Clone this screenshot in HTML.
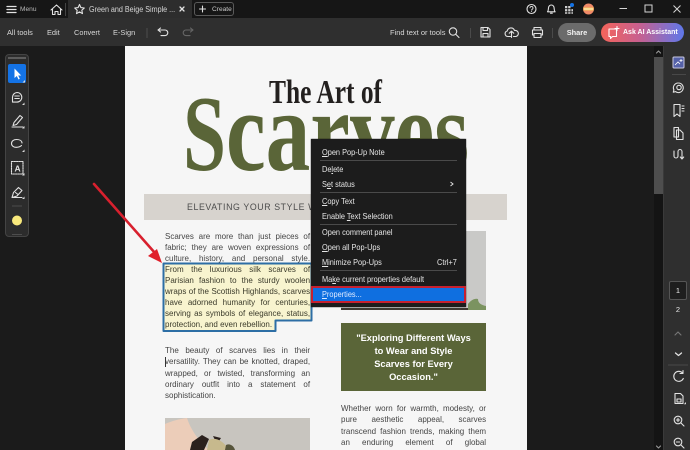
<!DOCTYPE html>
<html><head><meta charset="utf-8">
<style>
html,body{margin:0;padding:0;width:690px;height:450px;overflow:hidden;background:#1b1b1b;font-family:"Liberation Sans",sans-serif}
.a{position:absolute}
#root{position:relative;width:690px;height:450px;overflow:hidden;filter:blur(.25px)}
.t{position:absolute;white-space:nowrap;color:#d8d8d8;font-size:7.400px;line-height:10px}
.l{position:absolute;left:165px;width:156px;height:11px;font-size:8.600px;line-height:11px;color:#444;text-align:justify;text-align-last:justify;white-space:normal;transform:scaleX(.93);transform-origin:0 0}
.r{left:341px}
.hl{color:#3a3a2a}
.m{position:absolute;left:322px;color:#e6e6e6;font-size:8.400px;line-height:10px;white-space:nowrap;transform:scaleX(.88);transform-origin:0 0}
.s{position:absolute;left:320px;width:137px;height:1px;background:#4a4a4a}
.m u{text-underline-offset:1px}
svg{position:absolute;overflow:visible}
.i{fill:none;stroke:#e2e2e2;stroke-width:1.1;stroke-linecap:round;stroke-linejoin:round}
</style></head><body><div id="root">
<!-- bars -->
<div class="a" style="left:0;top:0;width:690px;height:18px;background:#161616"></div>
<div class="a" style="left:68px;top:0;width:124px;height:18px;background:#2d2d2d"></div>
<div class="a" style="left:0;top:18px;width:690px;height:28px;background:#2f2f2f"></div>
<div class="a" style="left:663px;top:46px;width:27px;height:404px;background:#2f2f2f;border-left:1px solid #3a3a3a;box-sizing:border-box"></div>
<div class="a" style="left:654px;top:46px;width:9px;height:404px;background:#141414"></div>
<div class="a" style="left:654px;top:57px;width:9px;height:137px;background:#4e4e4e"></div>
<svg style="left:0;top:0" width="690" height="450">
 <path class="i" stroke-width="1" d="M656.500 53l2-2 2 2M656.500 446l2 2 2-2" style="stroke:#999"/>
 <path d="M7 6.500h9M7 9.500h9M7 12.500h9" class="i" style="stroke-width:1.300"/>
 <path class="i" d="M51 10l5.500-5 5.500 5M52.500 9v5.500h2.500v-3h3v3h2.500V9" />
 <path d="M65.500 3v13" stroke="#444" fill="none"/>
 <path class="i" d="M79.500 4.500l1.400 3.100 3.400.4-2.500 2.300.7 3.300-3-1.700-3 1.700.7-3.300-2.500-2.300 3.400-.4z"/>
 <path class="i" d="M180 7l4 4M184 7l-4 4" style="stroke-width:1.300"/>
 <rect x="194.500" y="2.500" width="39" height="13" rx="2.500" fill="none" stroke="#5a5a5a"/>
 <path class="i" d="M199.500 9h6M202.500 6v6"/>
 <path d="M147 28v10" stroke="#4d4d4d" fill="none"/>
 <path class="i" d="M158 30h7a2.800 2.800 0 0 1 0 5.600h-4M158 30l2.500-2M158 30l2.500 2"/>
 <path class="i" style="stroke:#666" d="M193 30h-7a2.800 2.800 0 0 0 0 5.600h4M193 30l-2.500-2M193 30l-2.500 2"/>
 <circle class="i" cx="531.500" cy="9" r="4.500"/>
 <path class="i" d="M530 7.800a1.500 1.500 0 1 1 1.800 1.600v.8M531.500 11.300v.2" style="stroke-width:.9"/>
 <path class="i" d="M547.500 11.800c1-1 .8-2.500 1-4a2.800 2.800 0 0 1 5.600 0c.2 1.500 0 3 1 4zM550.500 13.200h1.800"/>
 <path fill="#cfcfcf" d="M565 6h2.300v2.300H565zM568.200 6h2.300v2.300h-2.300zM565 9.100h2.300v2.300H565zM568.200 9.100h2.300v2.300h-2.300zM571.400 9.100h1.600v2.300h-1.600zM565 12.200h2.300v1.600H565zM568.200 12.200h2.300v1.600h-2.300zM571.400 12.200h1.600v1.600h-1.600z"/>
 <circle cx="572" cy="5" r="2" fill="#1473e6"/>
 <circle cx="588.500" cy="9" r="5.500" fill="#f08a68"/>
 <path d="M583.500 7.500h10v3h-10z" fill="#f6c85a"/>
 <path d="M584 9h9" stroke="#fff0d0" fill="none"/>
 <path d="M619.500 8.500h7.500" stroke="#d5d5d5" fill="none"/>
 <rect x="645" y="5" width="7" height="7" fill="none" stroke="#d5d5d5"/>
 <path d="M673.500 5.500l7 7M680.500 5.500l-7 7" stroke="#d5d5d5" fill="none"/>
 <circle class="i" cx="453" cy="31.500" r="3.700"/>
 <path class="i" d="M456 34.500l3 3"/>
 <path d="M470.500 28v10M552.500 28v10" stroke="#4a4a4a" fill="none"/>
 <path class="i" d="M481 27.500h7l2 2V37h-9zM483 27.500v3h4.500v-3M483 37v-3.500h5V37"/>
 <path class="i" d="M510.500 36.500h-2.800a2.800 2.800 0 0 1-.5-5.500 3.800 3.800 0 0 1 7.300-.5 3 3 0 0 1 1.500 6h-2.500M511.500 37.500v-6M509.300 33.200l2.200-2 2.200 2"/>
 <path class="i" d="M534 30v-2.500h7V30M534 35h-1.500v-5h10v5H541M534 33.500h7v4h-7z"/>
</svg>
<div class="t" style="left:20px;top:4.500px;color:#b8b8b8;font-size:6.600px">Menu</div>
<div class="t" style="left:89px;top:4.500px;font-size:7.800px;color:#d6d6d6;transform:scaleX(.92);transform-origin:0 0">Green and Beige Simple ...</div>
<div class="t" style="left:212px;top:4.500px;font-size:6.600px;color:#c8c8c8">Create</div>
<div class="t" style="left:7px;top:28px">All tools</div>
<div class="t" style="left:47px;top:28px">Edit</div>
<div class="t" style="left:74px;top:28px">Convert</div>
<div class="t" style="left:113px;top:28px">E-Sign</div>
<div class="t" style="left:390px;top:27.500px;font-size:7.500px">Find text or tools</div>
<div class="a" style="left:558px;top:23px;width:38px;height:19px;border-radius:10px;background:#6b6b6b;color:#f2f2f2;font-size:7.400px;font-weight:bold;line-height:19px;text-align:center">Share</div>
<div class="a" style="left:601px;top:23px;width:83px;height:19px;border-radius:10px;background:linear-gradient(90deg,#f4645a,#c9608e 45%,#5f78ea);color:#fff;font-size:7px;font-weight:bold;line-height:19px;text-indent:22px;white-space:nowrap">Ask AI Assistant</div>
<svg style="left:0;top:0" width="690" height="450"><path class="i" style="stroke:#fff" d="M609 29h7.500v7.500h-4l-2 2v-2H609zM617 26.500v4M615 28.500h4"/></svg>

<!-- page -->
<div class="a" style="left:125px;top:46px;width:402px;height:404px;background:#f6f6f6"></div>
<svg style="left:0;top:0" width="690" height="450">
 <text x="269" y="103" font-family="Liberation Serif" font-size="34" font-weight="bold" fill="#23201f" textLength="113" lengthAdjust="spacingAndGlyphs">The Art of</text>
 <text x="183" y="170" font-family="Liberation Serif" font-size="108" font-weight="bold" fill="#5a6538" textLength="43" lengthAdjust="spacingAndGlyphs">S</text>
 <text x="226" y="170" font-family="Liberation Serif" font-size="116" font-weight="bold" fill="#5a6538" textLength="243" lengthAdjust="spacingAndGlyphs">carves</text>
</svg>
<div class="a" style="left:144px;top:194px;width:363px;height:26px;background:#d7d3ce"></div>
<div class="a" style="left:187px;top:201px;font-size:8.800px;line-height:12px;letter-spacing:.6px;color:#4c4c4c;white-space:nowrap">ELEVATING YOUR STYLE WITH</div>

<!-- right image -->
<div class="a" style="left:341px;top:231px;width:145px;height:79px;background:#c9c9c7"></div>
<svg style="left:0;top:0" width="690" height="450">
 <path fill="#7b9360" d="M468 304c3-4 7-6 10-5 0 4 3 6 8 7v4h-18z"/>
 <path fill="#3f3a33" d="M341 308h127v2H341z"/>
</svg>
<!-- quote -->
<div class="a" style="left:341px;top:323px;width:145px;height:68px;background:#5a6538;color:#fff;font-size:9.300px;font-weight:bold;line-height:13px;text-align:center;padding-top:8.500px;box-sizing:border-box">"Exploring Different Ways<br>to Wear and Style<br>Scarves for Every<br>Occasion."</div>

<!-- highlight -->
<svg style="left:0;top:0" width="690" height="450">
 <path d="M163.500 263.500H311.500V320.500H275.500V331H163.500Z" fill="#f8f4cf" stroke="#2d6ea5" stroke-width="2" stroke-linejoin="round"/>
 <path d="M94 184L155 253" stroke="#d8202e" stroke-width="2.600" fill="none" stroke-linecap="round"/>
 <path d="M162 263L148 256 157 249Z" fill="#e01f2a"/>
</svg>
<div class="l" style="top:231px">Scarves are more than just pieces of</div>
<div class="l" style="top:242px">fabric; they are woven expressions of</div>
<div class="l" style="top:253px">culture, history, and personal style.</div>
<div class="l hl" style="top:264px">From the luxurious silk scarves of</div>
<div class="l hl" style="top:275px">Parisian fashion to the sturdy woolen</div>
<div class="l hl" style="top:286px">wraps of the Scottish Highlands, scarves</div>
<div class="l hl" style="top:297px">have adorned humanity for centuries,</div>
<div class="l hl" style="top:308px">serving as symbols of elegance, status,</div>
<div class="l hl" style="top:319px;text-align-last:left">protection, and even rebellion.</div>
<div class="l" style="top:345px">The beauty of scarves lies in their</div>
<div class="l" style="top:356px">versatility. They can be knotted, draped,</div>
<div class="l" style="top:368px">wrapped, or twisted, transforming an</div>
<div class="l" style="top:379px">ordinary outfit into a statement of</div>
<div class="l" style="top:390px;text-align-last:left">sophistication.</div>
<div class="a" style="left:165px;top:357px;width:1px;height:10px;background:#333"></div>
<div class="l r" style="top:403px">Whether worn for warmth, modesty, or</div>
<div class="l r" style="top:414px">pure aesthetic appeal, scarves</div>
<div class="l r" style="top:426px">transcend fashion trends, making them</div>
<div class="l r" style="top:437px">an enduring element of global</div>

<!-- left image -->
<div class="a" style="left:165px;top:418px;width:145px;height:32px;background:#c8c5bf"></div>
<svg style="left:0;top:0" width="690" height="450">
 <path d="M165 424c7-3 14-5 22-6 3 10 12 24 22 32h-44z" fill="#eccdb9"/>
 <path d="M192 442l10-7 7 4-5 11h-14zM213 436l8 2-4 6z" fill="#2b211d"/>
 <path d="M209 440c6-3 14 0 20 10h-22z" fill="#c7b98d"/>
 <path d="M226 445c4-2 8 1 9 5h-10z" fill="#57553b"/>
</svg>

<!-- left tool panel -->
<div class="a" style="left:5px;top:54px;width:24px;height:183px;background:#2c2c2c;border:1px solid #444;border-radius:4px;box-sizing:border-box"></div>
<div class="a" style="left:8px;top:57px;width:18px;height:2px;background:#5c5c5c"></div>
<div class="a" style="left:8px;top:64px;width:18px;height:19px;background:#1473e6;border-radius:2px"></div>
<svg style="left:0;top:0" width="690" height="450">
 <path d="M14.500 68.500v9.500l2.300-2 1.700 3.500 1.300-.6-1.600-3.400h3z" fill="#fff"/>
 <g class="i">
 <path d="M17 92.500a4.800 4.800 0 1 1 0 9.600h-4.500v-5a4.800 4.800 0 0 1 4.500-4.600zM14.800 96h4.500M14.800 98.500h4.500"/>
 <path d="M13 125.500l1-3 6-7 2.500 2-6 7zM12 127h11"/>
 <path d="M22 143c0-2.500-2.800-3.500-5.500-3.500s-5 1.500-5 4 2.500 4 5 3.800 4-.8 5-1.800"/>
 <path d="M11.500 161.500h11.500v12.500h-11.500z" stroke-dasharray="1.500 1"/>
 </g>
 <text x="14.500" y="171.500" font-family="Liberation Sans" font-size="8.500" font-weight="bold" fill="#e2e2e2">A</text>
 <path class="i" d="M12 197.500l1.500-5 5-5 3.500 3-5 5.500zM12 197.500h10M15.500 192.500l2.500 2"/>
 <path d="M25 80l-2.500 2.500H25zM24.500 102.500l-2.500 2.500h2.500zM24.500 126l-2.500 2.500h2.500zM24.500 149.500l-2.500 2.500h2.500zM24.500 173l-2.500 2.500h2.500zM24.500 196.500l-2.500 2.500h2.500z" fill="#ddd"/>
 <path d="M12 206h10" stroke="#4d4d4d" fill="none"/>
 <circle cx="17" cy="220.500" r="5" fill="#f8e97c"/>
 <path d="M12 234.500h10" stroke="#4d4d4d" fill="none"/>
</svg>

<!-- right panel icons -->
<div class="a" style="left:669px;top:281px;width:18px;height:19px;background:#1e1e1e;border:1px solid #555;border-radius:2px;box-sizing:border-box;color:#eee;font-size:7.500px;line-height:17px;text-align:center">1</div>
<div class="a" style="left:669px;top:304px;width:18px;color:#e6e6e6;font-size:7.500px;line-height:12px;text-align:center">2</div>
<svg style="left:0;top:0" width="690" height="450">
 <rect x="673" y="57" width="11" height="11" rx="1" fill="#5561a8" stroke="#c8c8e0"/>
 <path d="M675 65l3-3 2 2M681 59v3M679.500 60.500h3" fill="none" stroke="#fff" stroke-width=".8"/>
 <path d="M672 74.500h14" stroke="#484848" fill="none"/>
 <g class="i">
 <path d="M678.500 83a4.800 4.800 0 1 1-3 8.600l-2.200.6.600-2.300a4.800 4.800 0 0 1 4.600-6.900z"/>
 <circle cx="679" cy="87.500" r="2.200"/>
 <path d="M674 104.500h6v12l-3-2.500-3 2.500zM682 106h2M682 108.500h2M682 111h2"/>
 <path d="M674 127.500h4.500v9.500H674zM676.500 130h3.500l3 3v6.500h-6.500z"/>
 <path d="M674 151v5a2 2 0 0 0 4 0v-4.500a2 2 0 0 1 4 0V159M680.300 157l1.700 2 1.700-2"/>
 </g>
 <path class="i" style="stroke:#777" d="M675 335l3-3 3 3"/>
 <path class="i" style="stroke-width:1.300" d="M675.500 353l3 2.500 3-2.500"/>
 <path d="M668 365h20" stroke="#484848" fill="none"/>
 <g class="i">
 <path d="M682.500 373a5 5 0 1 0 .8 5.500M683 370.500v3h-3"/>
 <path d="M675 393.500h5.500l2.500 2.500v7.500h-8zM677 399h4v3h-4z"/>
 <circle cx="678" cy="420" r="3.800"/><path d="M681 423l3 3M676.300 420h3.400M678 418.300v3.400"/>
 <circle cx="678" cy="442" r="3.800"/><path d="M681 445l3 3M676.300 442h3.400"/>
 </g>
 <path d="M686 402l-2.200 2.200h2.200z" fill="#ddd"/>
</svg>

<!-- context menu -->
<div class="a" style="left:311px;top:139px;width:155px;height:168px;background:#1c1c1c;box-shadow:0 0 1px #000"></div>
<div class="m" style="top:147px"><u>O</u>pen Pop-Up Note</div>
<div class="s" style="top:160px"></div>
<div class="m" style="top:164px">De<u>l</u>ete</div>
<div class="m" style="top:179px">S<u>e</u>t status</div>
<svg style="left:0;top:0" width="690" height="450"><path d="M450.500 182l2.500 2-2.500 2" fill="none" stroke="#ddd"/></svg>
<div class="s" style="top:192px"></div>
<div class="m" style="top:196px"><u>C</u>opy Text</div>
<div class="m" style="top:211px">Enable <u>T</u>ext Selection</div>
<div class="s" style="top:224px"></div>
<div class="m" style="top:227px">Open comment panel</div>
<div class="m" style="top:242px"><u>O</u>pen all Pop-Ups</div>
<div class="m" style="top:257px"><u>M</u>inimize Pop-Ups</div>
<div class="m" style="left:437px;top:257px">Ctrl+7</div>
<div class="s" style="top:270px"></div>
<div class="m" style="top:274px">Ma<u>k</u>e current properties default</div>
<div class="a" style="left:311px;top:286px;width:155px;height:17px;background:#0f6fe0;border:2px solid #c8202f;box-sizing:border-box"></div>
<div class="m" style="top:289px;color:#dfeaff"><u>P</u>roperties...</div>
</div></body></html>
